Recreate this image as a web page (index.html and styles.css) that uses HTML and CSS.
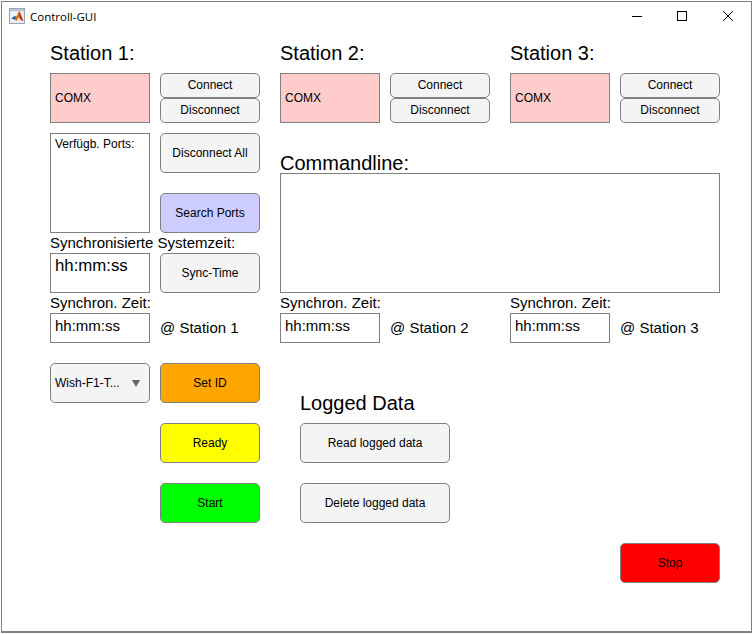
FILE: index.html
```html
<!DOCTYPE html>
<html lang="de">
<head>
	<meta charset="utf-8">
	<title>Controll-GUI</title>
	<link rel="stylesheet" href="styles.css">
</head>

<body>
	<div id="fenster">
		<header id="titelleiste">
			<svg class="appIcon" width="16" height="16" viewBox="0 0 15 15">
				<rect x="0.5" y="0.5" width="14" height="14" fill="#f2f3f5" stroke="#98a2b0"/>
				<rect x="1" y="1" width="13" height="2" fill="#b9c4d2"/>
				<path d="M2 10 L5 8 L7 8 L9 3.5 L10 3.5 L13.5 12.5 L11 11 L9 9 L7 12.5 L5 10 Z" fill="#e2711d"/>
				<path d="M2 10 L5 7.5 L7 8.5 L5.5 11 L4 10.5 Z" fill="#2f6ea8"/>
				<path d="M9 3.5 L10 3.5 L13.5 12.5 L10.5 10.5 Z" fill="#b5391a"/>
			</svg>
			<span class="titel">Controll-GUI</span>
			<div class="fensterKnoepfe">
				<svg width="12" height="12" viewBox="0 0 12 12"><path d="M2 6.5 H12" stroke="#000" fill="none"/></svg>
				<svg width="12" height="12" viewBox="0 0 12 12"><rect x="1.5" y="1.5" width="9" height="9" stroke="#000" fill="none"/></svg>
				<svg width="12" height="12" viewBox="0 0 12 12"><path d="M1 1 L11 11 M11 1 L1 11" stroke="#000" fill="none"/></svg>
			</div>
		</header>

		<section id="panel">
			<h2 class="s1 z1">Station 1:</h2>
			<div class="feld rot s1 z2">COMX</div>
			<button class="klein s2 z2a">Connect</button>
			<button class="klein s2 z3a">Disconnect</button>

			<h2 class="s3 z1">Station 2:</h2>
			<div class="feld rot s3 z2">COMX</div>
			<button class="klein s4 z2a">Connect</button>
			<button class="klein s4 z3a">Disconnect</button>

			<h2 class="s5 z1">Station 3:</h2>
			<div class="feld rot s5 z2">COMX</div>
			<button class="klein s6 z2a">Connect</button>
			<button class="klein s6 z3a">Disconnect</button>

			<div class="feld ports s1 z4">Verfügb. Ports:</div>
			<button class="s2 z4a">Disconnect All</button>
			<button class="lila s2 z5">Search Ports</button>

			<h2 class="s3bis6 z4b">Commandline:</h2>
			<div class="feld s3bis6 z5b"></div>

			<label class="s1 z6">Synchronisierte Systemzeit:</label>
			<div class="feld zeitGross s1 z7">hh:mm:ss</div>
			<button class="s2 z7">Sync-Time</button>

			<label class="s1 z8">Synchron. Zeit:</label>
			<div class="feld zeit s1 z9">hh:mm:ss</div>
			<label class="mitte s2 z9">@ Station 1</label>

			<label class="s3 z8">Synchron. Zeit:</label>
			<div class="feld zeit s3 z9">hh:mm:ss</div>
			<label class="mitte s4 z9">@ Station 2</label>

			<label class="s5 z8">Synchron. Zeit:</label>
			<div class="feld zeit s5 z9">hh:mm:ss</div>
			<label class="mitte s6 z9">@ Station 3</label>

			<div class="auswahl s1 z10">
				<span>Wish-F1-T...</span>
				<i class="pfeil"></i>
			</div>
			<button class="orange s2 z10">Set ID</button>
			<button class="gelb s2 z11">Ready</button>
			<button class="gruen s2 z12">Start</button>

			<div id="logged">
				<h2>Logged Data</h2>
				<button>Read logged data</button>
				<button>Delete logged data</button>
			</div>

			<button class="stop s6 z13">Stop</button>
		</section>
	</div>
</body>
</html>
```

FILE: styles.css
```css
*{
	margin: 0px;
	padding: 0px;
	box-sizing: border-box;
}
body{
	background-color: #FFF;
	font-family: "Liberation Sans", Arial, sans-serif;
	color: #000;
}
#fenster{
	width: 751px;
	height: 632px;
	margin: 1px 0px 0px 1px;
	border: 1px solid #808080;
	border-width: 1px 1px 2px 1px;
	background-color: #FFF;
	overflow: hidden;
}
#titelleiste{
	display: flex;
	align-items: center;
	height: 28px;
	padding-left: 7px;
}
.appIcon{
	margin-right: 5px;
}
.titel{
	font-family: "Open Sans", sans-serif;
	font-size: 11.5px;
}
.fensterKnoepfe{
	display: flex;
	gap: 34px;
	margin-left: auto;
	margin-right: 17px;
}
#panel{
	display: grid;
	margin: 10px 0px 0px 48px;
	grid-template-columns: 100px 10px 100px 20px 100px 10px 100px 20px 100px 10px 100px;
	grid-template-rows: 33px 25px 25px 10px 40px 20px 40px 20px 40px 20px 30px 20px 40px 20px 40px 20px 40px 20px 40px;
}
h2{
	font-size: 20px;
	font-weight: normal;
	line-height: 25px;
	white-space: nowrap;
	padding-top: 1px;
}
label{
	font-size: 15px;
	line-height: 20px;
	white-space: nowrap;
}
button{
	font-family: inherit;
	font-size: 12px;
	color: #000;
	background-color: #F4F4F4;
	border: 1px solid #808080;
	border-radius: 5px;
}
.klein{
	padding-bottom: 2px;
}
.feld{
	border: 1px solid #808080;
	background-color: #FFF;
	font-size: 12px;
	padding-left: 4px;
}
.rot{
	background-color: #FFCCCC;
	display: flex;
	align-items: center;
}
.ports{
	padding-top: 3px;
}
.zeitGross{
	font-size: 16.8px;
	padding-top: 2px;
}
.zeit{
	font-size: 15px;
	padding-top: 3px;
}
.mitte{
	align-self: center;
}
.auswahl{
	display: flex;
	align-items: center;
	justify-content: space-between;
	padding: 0px 9px 0px 4px;
	font-size: 12px;
	background-color: #F4F4F4;
	border: 1px solid #808080;
	border-radius: 5px;
}
.pfeil{
	width: 0px;
	height: 0px;
	border-left: 4px solid transparent;
	border-right: 4px solid transparent;
	border-top: 7px solid #666;
}
.lila{
	background-color: #CCCCFF;
}
.orange{
	background-color: #FFA500;
}
.gelb{
	background-color: #FFFF00;
}
.gruen{
	background-color: #00FF00;
}
.stop{
	background-color: #FF0000;
}

/* spalten */
.s1{ grid-column: 1; }
.s2{ grid-column: 3; }
.s3{ grid-column: 5; }
.s4{ grid-column: 7; }
.s5{ grid-column: 9; }
.s6{ grid-column: 11; }
.s3bis6{ grid-column: 5 / 12; }

/* zeilen */
.z1{ grid-row: 1; }
.z2{ grid-row: 2 / 4; }
.z2a{ grid-row: 2; }
.z3a{ grid-row: 3; }
.z4{ grid-row: 5 / 8; }
.z4a{ grid-row: 5; }
.z4b{ grid-row: 5 / 6; align-self: end; margin-bottom: -3px; }
.z5{ grid-row: 7; }
.z5b{ grid-row: 6 / 10; }
.z6{ grid-row: 8; }
.z7{ grid-row: 9; }
.z8{ grid-row: 10; }
.z9{ grid-row: 11; }
.z10{ grid-row: 13; }
.z11{ grid-row: 15; }
.z12{ grid-row: 17; }
.z13{ grid-row: 19; }

#logged{
	grid-column: 5 / 10;
	grid-row: 13 / 18;
	display: flex;
	flex-direction: column;
	justify-content: flex-end;
	gap: 20px;
	padding-left: 20px;
}
#logged h2{
	margin-bottom: -13px;
}
#logged button{
	width: 150px;
	height: 40px;
}
```
